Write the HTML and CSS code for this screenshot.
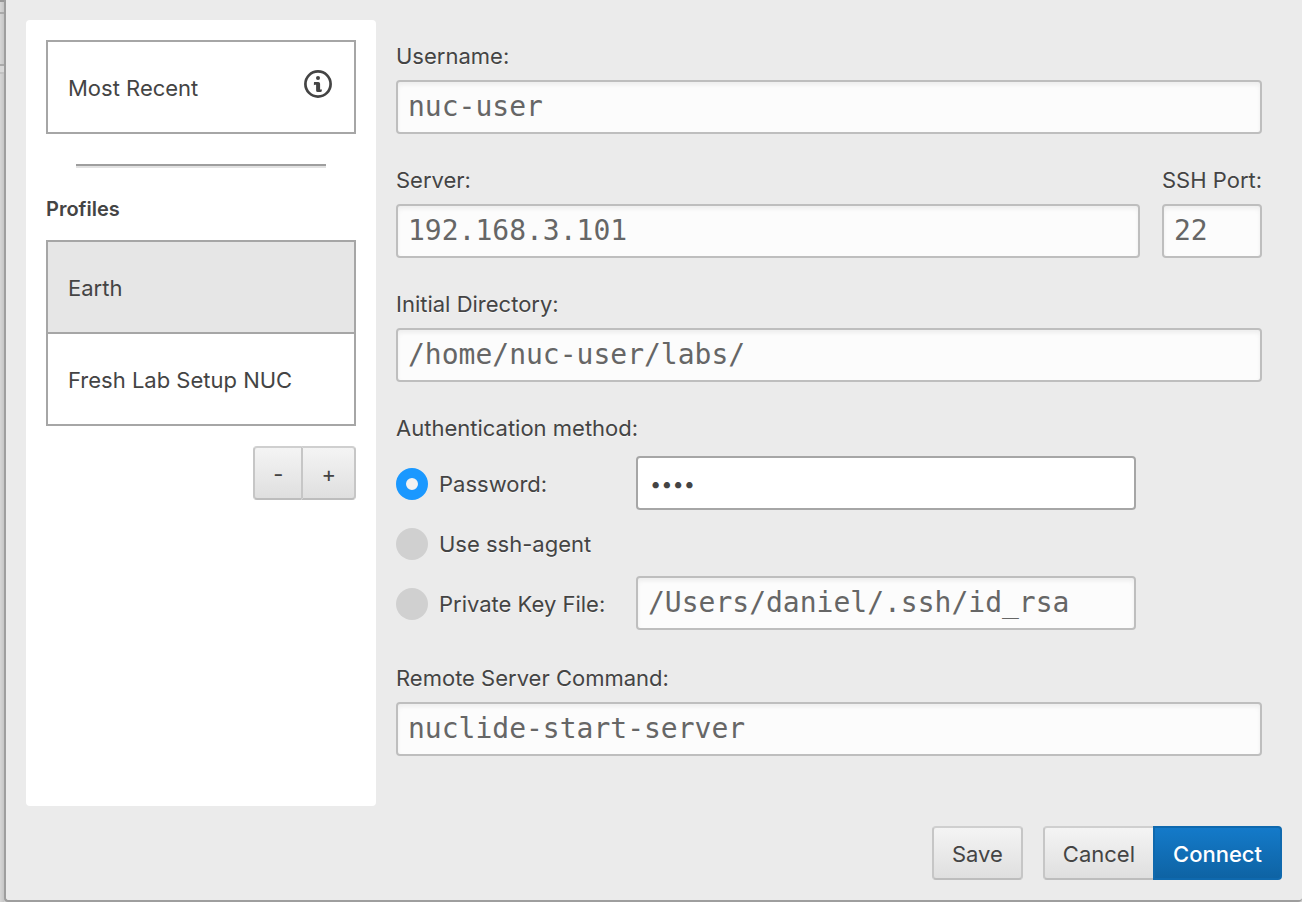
FILE: index.html
```html
<!DOCTYPE html>
<html lang="en">
<head>
<meta charset="utf-8">
<title>Connect to Remote Server</title>
<link rel="stylesheet" href="styles.css">
</head>
<body>
<div class="window">
  <div class="backdrop" aria-hidden="true">
    <div class="backdrop-bar"></div>
    <div class="backdrop-tab"></div>
    <div class="backdrop-line"></div>
  </div>
  <form class="dialog">
    <div class="dialog-body">
      <aside class="sidebar">
        <ul class="profile-list">
          <li class="profile"><span>Most Recent</span>
            <svg class="info-icon" viewBox="0 0 28 28" role="img" aria-label="Info">
              <circle cx="14" cy="14" r="12.6" fill="none" stroke="currentColor" stroke-width="2.7"/>
              <circle cx="14" cy="8" r="2" fill="currentColor"/>
              <path d="M10.4 12.1h3.9q1.8 0 1.8 1.7v5.8h.9q.8 0 .8-.7v1.8q0 1.4-1.4 1.4h-2.6q-1.7 0-1.7-1.6v-5.8h-1.1q-.9 0-1.1.7v-2.4q0-.9.5-.9z" fill="currentColor"/>
            </svg>
          </li>
        </ul>
        <hr class="divider">
        <h2 class="sidebar-title">Profiles</h2>
        <ul class="profile-list">
          <li class="profile selected">Earth</li>
          <li class="profile">Fresh Lab Setup NUC</li>
        </ul>
        <div class="button-group profile-actions">
          <button type="button" class="btn" aria-label="Remove profile">-</button>
          <button type="button" class="btn" aria-label="Add profile">+</button>
        </div>
      </aside>
      <div class="fields">
        <div class="field">
          <label for="username">Username:</label>
          <input class="text-input" id="username" type="text" value="nuc-user">
        </div>
        <div class="field-row">
          <div class="field">
            <label for="server">Server:</label>
            <input class="text-input" id="server" type="text" value="192.168.3.101">
          </div>
          <div class="field">
            <label for="port">SSH Port:</label>
            <input class="text-input" id="port" type="text" value="22">
          </div>
        </div>
        <div class="field">
          <label for="directory">Initial Directory:</label>
          <input class="text-input" id="directory" type="text" value="/home/nuc-user/labs/">
        </div>
        <div class="auth" role="radiogroup" aria-labelledby="auth-title">
          <div class="auth-title" id="auth-title">Authentication method:</div>
          <div class="auth-row">
            <label class="auth-choice"><input class="radio" type="radio" name="auth" checked>Password:</label>
            <input class="password-input" type="password" value="labs" aria-label="Password">
          </div>
          <div class="auth-row">
            <label class="auth-choice"><input class="radio" type="radio" name="auth">Use ssh-agent</label>
          </div>
          <div class="auth-row">
            <label class="auth-choice"><input class="radio" type="radio" name="auth">Private Key File:</label>
            <input class="text-input" type="text" value="/Users/daniel/.ssh/id_rsa" aria-label="Private Key File">
          </div>
        </div>
        <div class="field">
          <label for="command">Remote Server Command:</label>
          <input class="text-input" id="command" type="text" value="nuclide-start-server">
        </div>
      </div>
    </div>
    <div class="dialog-footer">
      <button type="button" class="btn">Save</button>
      <div class="button-group">
        <button type="button" class="btn">Cancel</button>
        <button type="submit" class="btn btn-primary">Connect</button>
      </div>
    </div>
  </form>
</div>
</body>
</html>
```
FILE: styles.css
```css
* {
  box-sizing: border-box;
}

body {
  margin: 0;
  background: #d2d2d2;
  color: #444;
  font-family: Inter, "Liberation Sans", sans-serif;
  font-size: 22px;
  line-height: 32px;
}

.window {
  display: flex;
  min-height: 100vh;
}

.backdrop {
  width: 4px;
  background: linear-gradient(to right, #d6d6d6, #c6c6c6);
}

.backdrop-bar {
  height: 14px;
  border-top: 2px solid #999;
  border-bottom: 2px solid #aaa;
}

.backdrop-tab {
  height: 52px;
  border-bottom: 2px solid #aaa;
}

.backdrop-line {
  height: 8px;
  background: #d8d8d8;
  border-bottom: 2px solid #c2c2c2;
}

.dialog {
  flex: 1;
  min-width: 0;
  display: flex;
  flex-direction: column;
  gap: 20px;
  padding: 20px;
  background: #ebebeb;
  border: solid #9e9e9e;
  border-width: 0 0 2px 2px;
  border-radius: 0 0 4px 4px;
}

.dialog-body {
  flex: 1;
  display: flex;
}

.sidebar {
  width: 350px;
  padding: 20px;
  background: #fff;
  border-radius: 4px;
}

.profile-list {
  margin: 0;
  padding: 0;
  list-style: none;
  border: 2px solid #a6a6a6;
}

.profile {
  display: flex;
  justify-content: space-between;
  padding: 28px 22px 26px 20px;
  line-height: 36px;
}

.profile + .profile {
  border-top: 2px solid #a6a6a6;
}

.profile.selected {
  background: #e6e6e6;
}

.info-icon {
  width: 28px;
  height: 28px;
}

.divider {
  height: 4px;
  margin: 30px;
  border: 0;
  background: #e2e2e2;
  border-top: 2px solid #9e9e9e;
}

.sidebar-title {
  margin: 0 0 20px;
  font-size: 20px;
  font-weight: 600;
  line-height: 22px;
}

.button-group {
  display: flex;
}

.profile-actions {
  justify-content: flex-end;
  margin-top: 20px;
}

.btn {
  height: 54px;
  padding: 2px 18px 0;
  color: #444;
  font: inherit;
  background: linear-gradient(#f4f4f4, #dfdfdf);
  border: 2px solid #c6c6c6;
  border-top-color: #cfcfcf;
  border-bottom-color: #bdbdbd;
  border-radius: 4px;
}

.button-group .btn:first-child {
  border-right: 0;
  border-radius: 4px 0 0 4px;
}

.button-group .btn:last-child {
  border-radius: 0 4px 4px 0;
}

.btn-primary {
  color: #fff;
  font-weight: 500;
  background: linear-gradient(#147bcb, #0e62a2) border-box;
  border-color: #0f69ae;
}

.fields {
  flex: 1;
  min-width: 0;
  display: flex;
  flex-direction: column;
  gap: 30px;
  padding: 20px;
  text-shadow: 0 1px 0 rgba(255, 255, 255, 0.6);
}

.field {
  display: flex;
  flex-direction: column;
  gap: 8px;
}

.field-row {
  display: grid;
  grid-template-columns: 1fr 100px;
  gap: 22px;
}

.field label {
  white-space: nowrap;
}

.text-input,
.password-input {
  width: 100%;
  height: 54px;
  border-radius: 4px;
}

.text-input {
  padding: 0 10px 2px;
  color: #666;
  font-family: "DejaVu Sans Mono", "Liberation Mono", monospace;
  font-size: 28px;
  background: #fcfcfc;
  border: 2px solid #bebebe;
  box-shadow: inset 0 3px 4px rgba(0, 0, 0, 0.06);
}

.password-input {
  padding: 2px 12px 0;
  color: #444;
  font-family: inherit;
  font-size: 20px;
  background: #fff;
  border: 2px solid #a6a6a6;
}

.auth {
  display: flex;
  flex-direction: column;
  gap: 6px;
  padding-bottom: 2px;
}

.auth-title {
  padding-bottom: 6px;
}

.auth-row {
  display: grid;
  grid-template-columns: 240px minmax(0, 500px);
  align-items: center;
  min-height: 54px;
}

.auth-choice {
  display: flex;
  align-items: center;
  gap: 11px;
  padding-top: 2px;
}

.radio {
  appearance: none;
  width: 32px;
  height: 32px;
  margin: 0;
  border-radius: 50%;
  background: #d0d0d0;
}

.radio:checked {
  background: #f2f2f2;
  border: 10px solid #1a98ff;
}

.dialog-footer {
  display: flex;
  justify-content: flex-end;
  gap: 20px;
}
```
